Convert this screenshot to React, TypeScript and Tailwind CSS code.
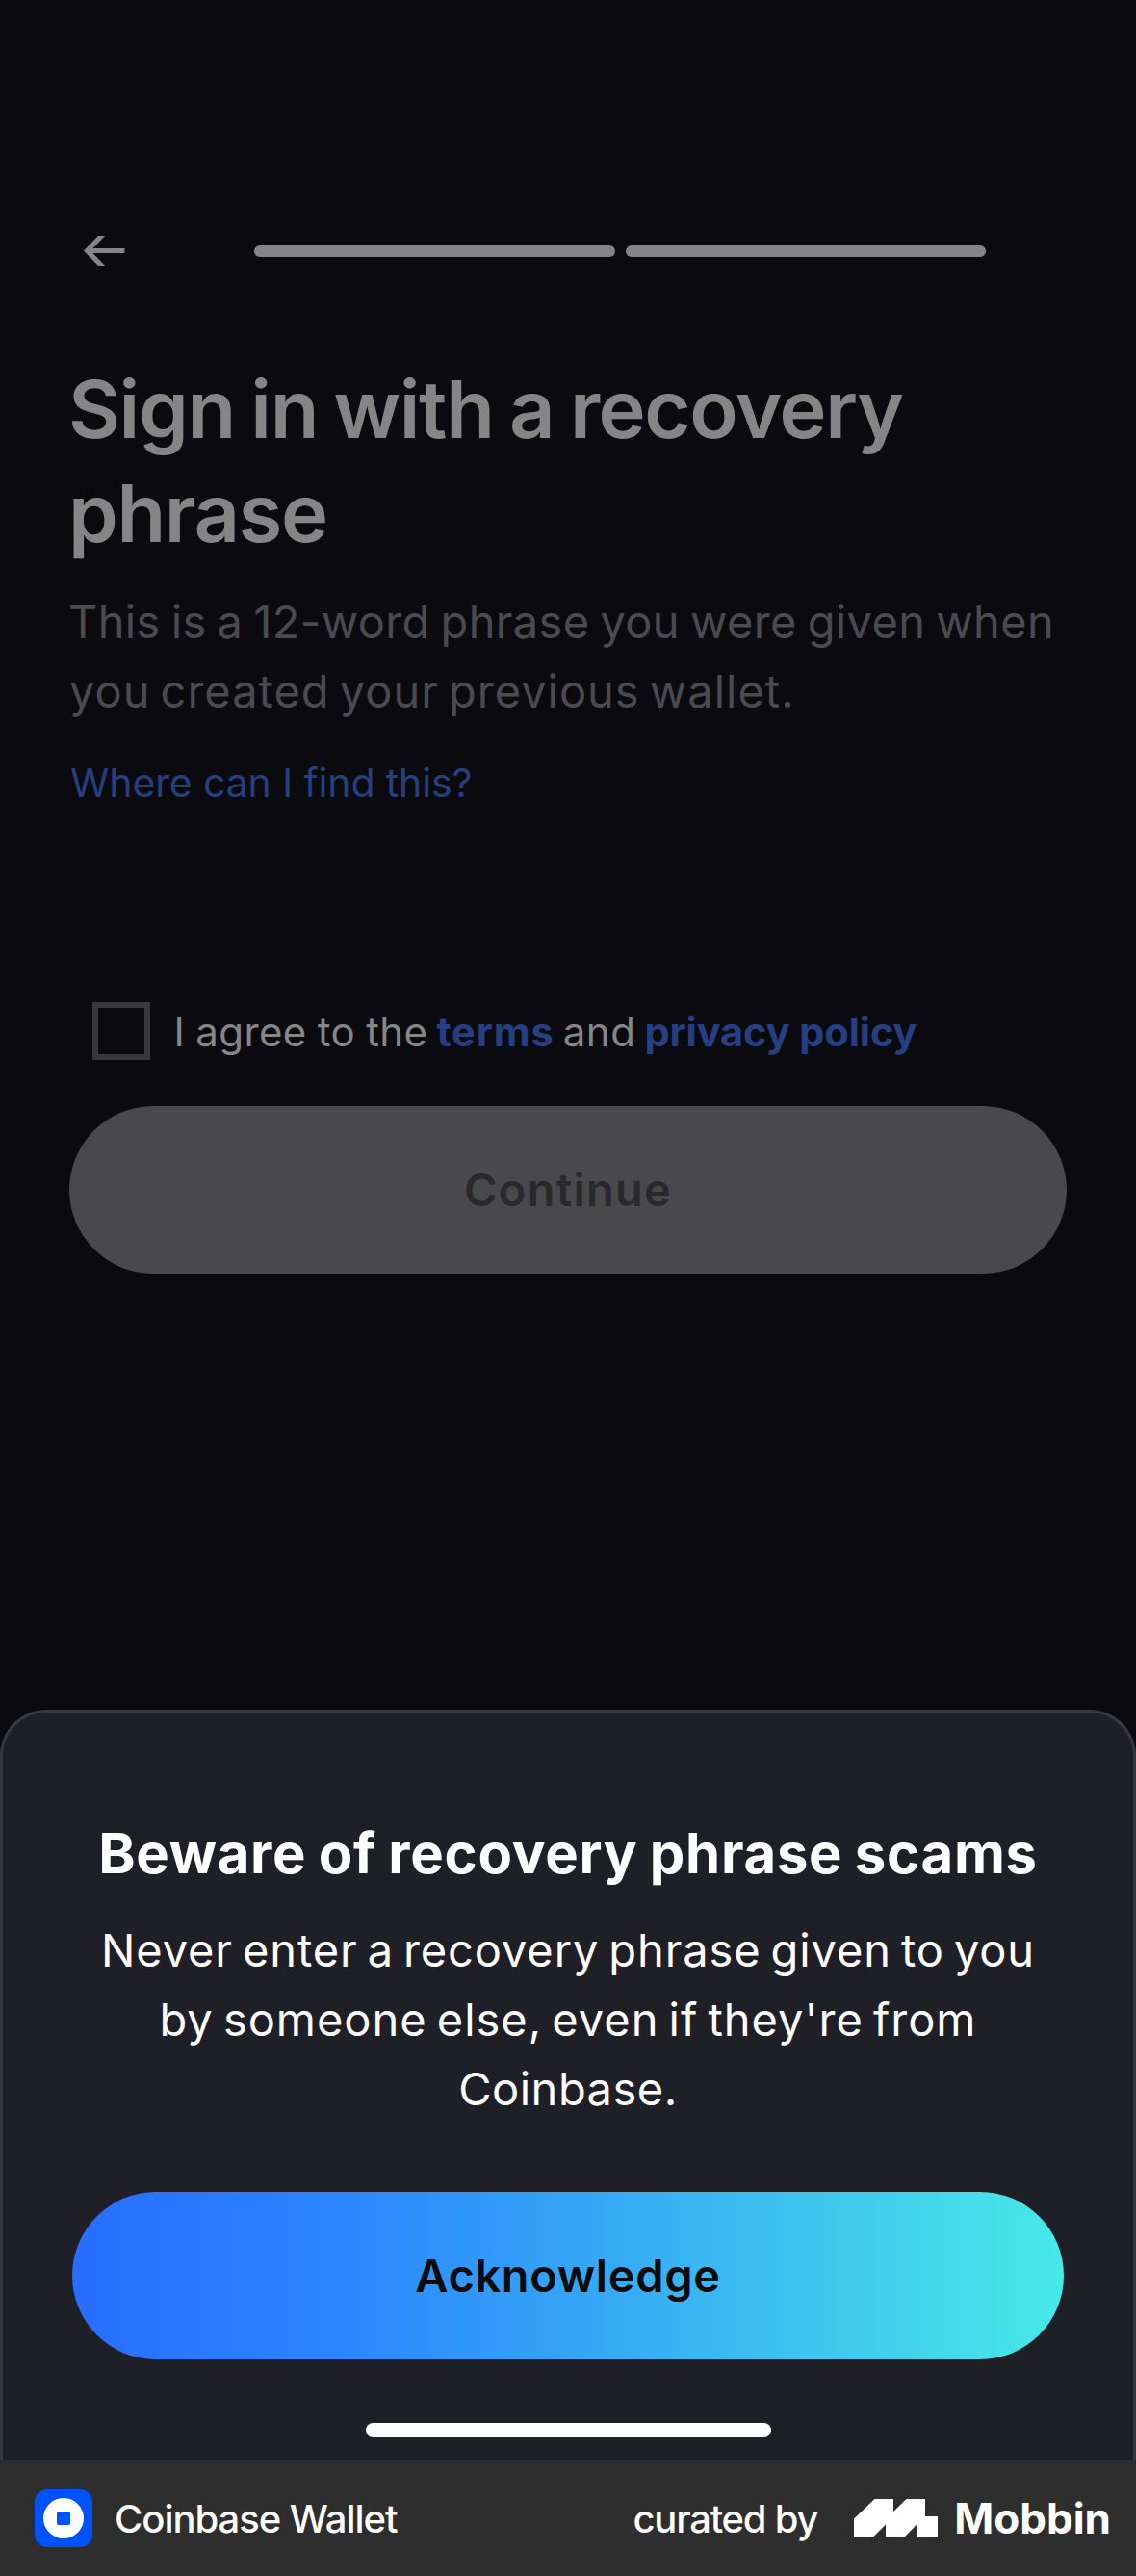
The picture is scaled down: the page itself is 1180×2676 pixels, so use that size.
function BackArrow() {
  return (
    <svg className="h-[31px] w-[44px]" viewBox="0 0 44 31" fill="none" stroke="#858586">
      <path d="M43.5 15.5H5" strokeWidth="5" />
      <path d="M21 -1.5L4.5 15.5L21 32.5" strokeWidth="5.2" />
    </svg>
  );
}

function StepBar() {
  return <div className="h-3 w-[374.5px] rounded-full bg-[#858586]" />;
}

function Header() {
  return (
    <header className="flex items-center pt-[245px]">
      <div className="ml-[14px]">
        <BackArrow />
      </div>
      <div className="ml-[134px] flex gap-[11px]">
        <StepBar />
        <StepBar />
      </div>
    </header>
  );
}

function Consent() {
  return (
    <div className="mt-[200px] ml-6 flex h-[60px] items-center">
      <div className="h-[60px] w-[60px] border-[6px] border-[#38383c]" />
      <p className="mt-[2px] ml-[24.5px] flex gap-[9px] text-[42px] leading-[60px] whitespace-nowrap text-[#868687]">
        <span className="tracking-[0.37px] [word-spacing:-1px]">I agree to the</span>
        <span className="text-[41.5px] font-bold tracking-[0.9px] text-[#253f82]">terms</span>
        <span className="tracking-[0.5px]">and</span>
        <span className="text-[41.5px] font-bold tracking-[-0.1px] text-[#253f82]">privacy policy</span>
      </p>
    </div>
  );
}

function SignInScreen() {
  return (
    <main className="h-[1776px] px-[72px]">
      <Header />
      <h1 className="-ml-px mt-[95px] text-[83px] leading-[108px] font-semibold whitespace-nowrap text-[#858586]">
        <span className="block tracking-[-1.4px] [word-spacing:-3px]">Sign in with a recovery</span>
        <span className="block tracking-[-1.41px]">phrase</span>
      </h1>
      <p className="mt-[23px] text-[47px] leading-[72px] whitespace-nowrap text-[#4a4a4f]">
        <span className="-ml-px block tracking-[0.33px] [word-spacing:-2.5px]">This is a 12-word phrase you were given when</span>
        <span className="block tracking-[0.98px] [word-spacing:-4px]">you created your previous wallet.</span>
      </p>
      <a className="mt-[31px] ml-px block text-[41px] leading-[56px] tracking-[-0.12px] text-[#253f80]">
        Where can I find this?
      </a>
      <Consent />
      <button className="mt-12 h-[174px] w-full rounded-full bg-[#49494b] text-[47px] font-semibold tracking-[1.22px] text-[#29292b]">
        Continue
      </button>
    </main>
  );
}

function WarningSheet() {
  return (
    <section className="flex h-[780px] flex-col items-center rounded-t-[48px] border-[3px] border-b-0 border-[#38393d] bg-[#1f2027] px-[72px] pt-[110px] text-center text-white">
      <h2 className="text-[58px] leading-[72px] font-bold tracking-[0.73px] whitespace-nowrap [word-spacing:-2px]">
        Beware of recovery phrase scams
      </h2>
      <p className="mt-[29px] text-[47px] leading-[72px] whitespace-nowrap [word-spacing:-4px]">
        <span className="block tracking-[0.88px]">Never enter a recovery phrase given to you</span>
        <span className="block tracking-[0.97px]">by someone else, even if they're from</span>
        <span className="block tracking-[0.5px]">Coinbase.</span>
      </p>
      <button className="mt-[71px] h-[174px] w-full shrink-0 rounded-full bg-[linear-gradient(90deg,#276eff_0%,#2c83ff_25%,#34a4f6_50%,#3fc6ee_75%,#47e9e7_100%)] text-[47px] font-semibold tracking-[0.64px] text-[#0a0b0d]">
        Acknowledge
      </button>
      <div className="mt-[66px] h-[15px] w-[421px] shrink-0 rounded-full bg-white" />
    </section>
  );
}

function WalletIcon() {
  return (
    <div className="flex h-[60px] w-[60px] items-center justify-center rounded-[13px] bg-[#0052ff]">
      <div className="flex h-[42px] w-[42px] items-center justify-center rounded-full bg-white">
        <div className="h-[14px] w-[14px] rounded-[2px] bg-[#0052ff]" />
      </div>
    </div>
  );
}

function MobbinMark() {
  return (
    <svg className="h-10 w-[87px]" viewBox="0 0 87 40" fill="#fff">
      <path d="M0 20.5L21.5 0H41V13L54.5 0H74V18H87V40H65.3V26.5L52 40H33V26.5L19.5 40H0Z" />
    </svg>
  );
}

function CreditBar() {
  return (
    <footer className="flex h-[120px] items-center bg-[#2e2e2e] pr-[26px] pl-9 text-[40px] leading-[60px] font-medium whitespace-nowrap text-white">
      <WalletIcon />
      <span className="mt-[2px] ml-[23px] tracking-[-1.04px]">Coinbase Wallet</span>
      <span className="mt-[2px] ml-auto tracking-[-1.25px]">curated by</span>
      <div className="ml-[38px]">
        <MobbinMark />
      </div>
      <span className="ml-[17px] text-[44px] font-bold">Mobbin</span>
    </footer>
  );
}

export default function App() {
  return (
    <div className="h-[2676px] w-[1180px] overflow-hidden bg-[#0b0b0f] font-[Inter,sans-serif]">
      <SignInScreen />
      <WarningSheet />
      <CreditBar />
    </div>
  );
}
